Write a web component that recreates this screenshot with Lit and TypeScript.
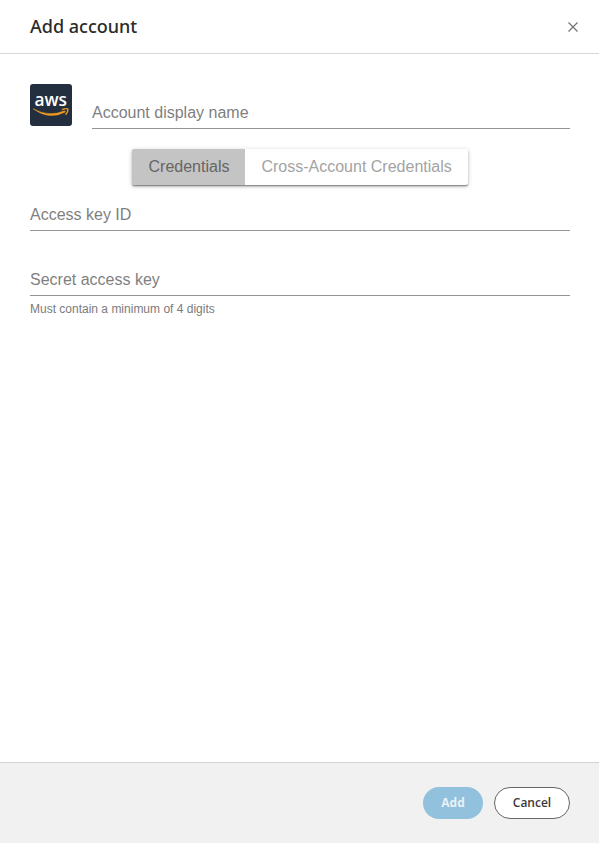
import { LitElement, html, css } from "lit";
import { customElement, property } from "lit/decorators.js";

@customElement("text-field")
class TextField extends LitElement {
  @property() label = "";
  @property() hint = "";

  static styles = css`
    :host { display: block; }
    .field {
      height: 32px;
      box-sizing: border-box;
      border-bottom: 1px solid #949494;
      font: 16px/32px "Liberation Sans", Arial, sans-serif;
      color: #7f7f7f;
    }
    .hint {
      font: 12px/14px "Liberation Sans", Arial, sans-serif;
      color: #7b7b7b;
      margin-top: 6px;
    }
  `;

  render() {
    return html`
      <div class="field">${this.label}</div>
      ${this.hint ? html`<div class="hint">${this.hint}</div>` : ""}
    `;
  }
}

@customElement("app-root")
class AppRoot extends LitElement {
  static styles = css`
    :host {
      display: flex;
      flex-direction: column;
      height: 100vh;
      background: #fff;
      font-family: "Open Sans", sans-serif;
      overflow: hidden;
    }
    header {
      display: flex;
      align-items: center;
      justify-content: space-between;
      box-sizing: border-box;
      height: 54px;
      padding: 0 21px 0 30px;
      border-bottom: 1px solid #d7d7d7;
    }
    h1 {
      margin: 0 0 2px;
      font-family: "Noto Sans", "Open Sans", sans-serif;
      font-size: 18px;
      font-weight: 500;
      line-height: 24px;
      color: #2b2b2b;
    }
    .close { display: block; }
    main {
      flex: 1;
      padding: 30px 29px 0 30px;
    }
    .name-row { display: flex; gap: 20px; height: 45px; }
    .name-row text-field { flex: 1; margin-top: 13px; }
    .logo { display: block; flex: none; }
    .toggle {
      display: flex;
      width: 336px;
      height: 36px;
      margin: 20px auto 14px 102px;
      border-radius: 2px;
      overflow: hidden;
      box-shadow: 0 1px 5px rgba(0,0,0,.2), 0 2px 2px rgba(0,0,0,.14), 0 1px 1px rgba(0,0,0,.3);
      font: 16px/36px "Liberation Sans", Arial, sans-serif;
    }
    .tab { padding: 0 16px; color: #a3a3a3; }
    .tab.on { padding: 0 15.5px 0 16.5px; background: #c4c4c4; color: #666; }
    .tab + .tab { padding-left: 16.5px; }
    .secret { margin-top: 33px; }
    footer {
      display: flex;
      justify-content: flex-end;
      gap: 11px;
      box-sizing: border-box;
      height: 81px;
      padding: 24px 29px 0 0;
      border-top: 1px solid #d2d2d2;
      background: #f1f1f1;
    }
    .btn {
      box-sizing: border-box;
      height: 32px;
      border-radius: 16px;
      text-align: center;
      font-size: 12px;
      line-height: 32px;
    }
    .add { width: 60px; background: #91c1dc; color: #e9f1f6; font-weight: 700; }
    .cancel {
      width: 76px;
      border: 1px solid #666;
      background: #fff;
      color: #3a3a3a;
      font-weight: 600;
      line-height: 30px;
    }
  `;

  render() {
    return html`
      <header>
        <h1>Add account</h1>
        <svg class="close" width="10" height="10" viewBox="0 0 10 10" fill="none" stroke="#737373" stroke-width="1.2">
          <path d="M.5 .5l9 9M9.500 .5l-9 9" />
        </svg>
      </header>
      <main>
        <div class="name-row">
          <svg class="logo" width="42" height="42" viewBox="0 0 42 42">
            <rect width="42" height="42" rx="3" fill="#232f3e" />
            <text x="4.500" y="22" textLength="32.500" lengthAdjust="spacingAndGlyphs" font-family="Open Sans" font-size="18.500" font-weight="600" fill="#fff">aws</text>
            <path d="M3 24.700Q19 33.600 34.500 26.800L35.500 28Q19 36.500 3 24.700Z" fill="#f19a1f" stroke="#f19a1f" stroke-width=".5" />
            <path d="M32.500 25.300q4.300-1.300 5.400-.2q.3 2.500-2 5.200" fill="none" stroke="#f19a1f" stroke-width="1.400" stroke-linecap="round" />
          </svg>
          <text-field label="Account display name"></text-field>
        </div>
        <div class="toggle">
          <div class="tab on">Credentials</div>
          <div class="tab">Cross-Account Credentials</div>
        </div>
        <text-field label="Access key ID"></text-field>
        <text-field class="secret" label="Secret access key" hint="Must contain a minimum of 4 digits"></text-field>
      </main>
      <footer>
        <div class="btn add">Add</div>
        <div class="btn cancel">Cancel</div>
      </footer>
    `;
  }
}
